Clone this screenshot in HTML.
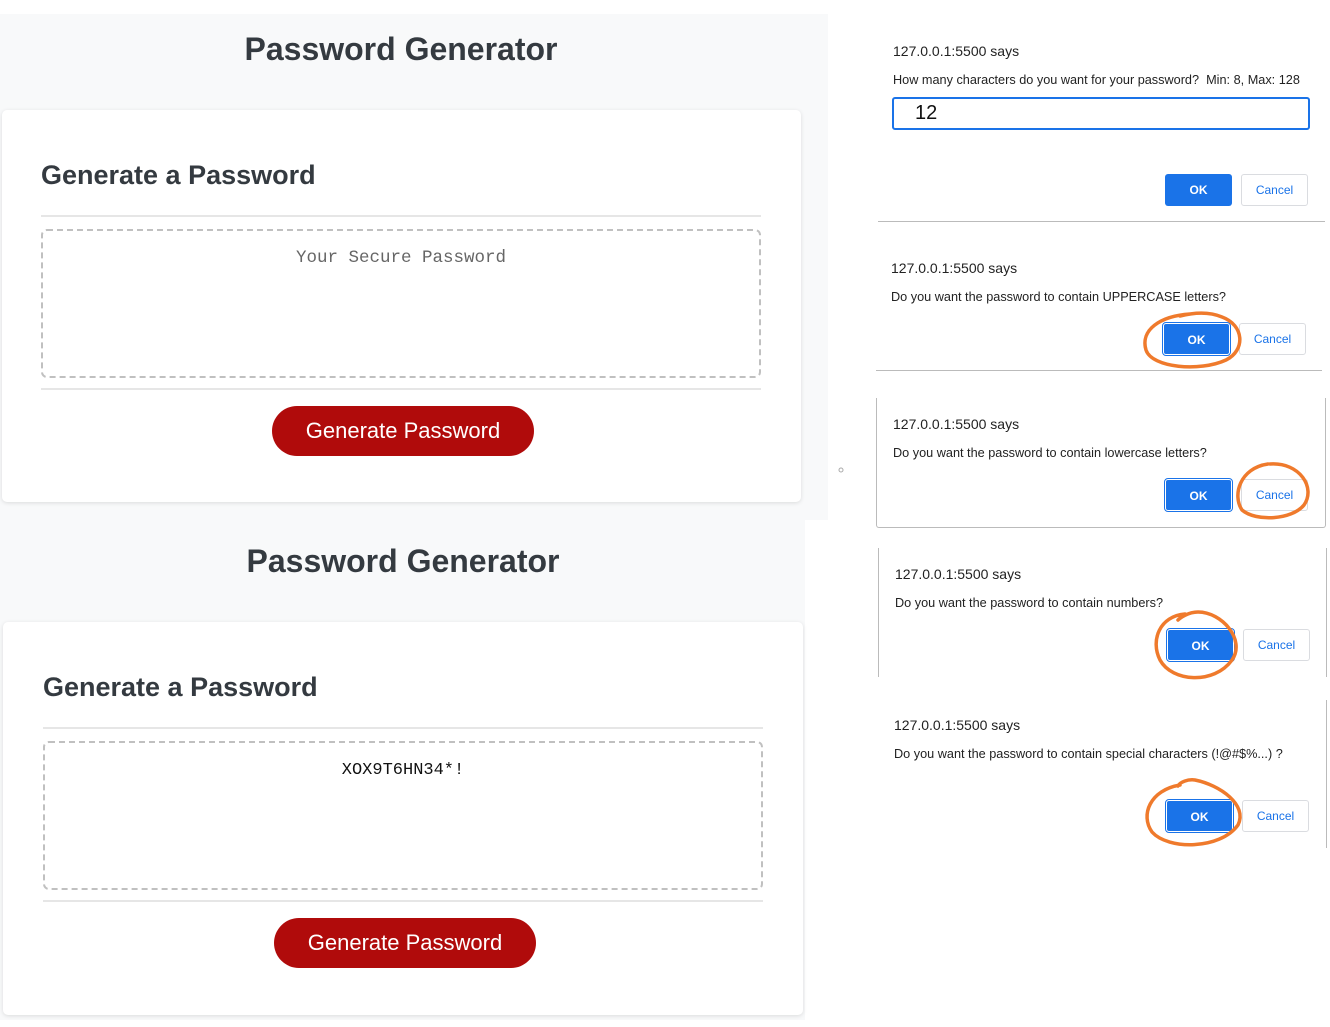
<!DOCTYPE html>
<html><head><meta charset="utf-8"><style>
*{margin:0;padding:0;box-sizing:border-box}
body{width:1330px;height:1027px;background:#fff;position:relative;overflow:hidden;font-family:"Liberation Sans",sans-serif}
.a{position:absolute}
.bg{background:#f8f9fa}
.card{background:#fff;border-radius:5px;box-shadow:0 1px 4px rgba(0,0,0,.12)}
.t1{font-weight:bold;font-size:32px;color:#343a40;text-align:center;width:800px}
.t2{font-weight:bold;font-size:27px;color:#343a40}
.hr{height:2px;background:#e6e6e6}
.box{border:2px dashed #c0c0c0;border-radius:6px;font-family:"Liberation Mono",monospace;text-align:center}
.btn{background:#b00b0b;color:#fff;font-size:22px;border-radius:26px;text-align:center;line-height:50px}
.dt{font-size:14px;color:#222}
.dm{font-size:12.7px;color:#222}
.ok{background:#1a73e8;color:#fff;font-size:12px;font-weight:bold;text-align:center;line-height:32px;width:67px;height:32px;border-radius:3px}
.ca{background:#fff;color:#1a73e8;font-size:12px;text-align:center;line-height:30px;width:67px;height:32px;border:1px solid #dadce0;border-radius:3px}
</style></head><body>
<div class="a bg" style="left:0;top:14px;width:828px;height:506px"></div>
<div class="a t1" style="left:1px;top:31px">Password Generator</div>
<div class="a card" style="left:2px;top:110px;width:799px;height:392px"></div>
<div class="a t2" style="left:41px;top:160px">Generate a Password</div>
<div class="a hr" style="left:41px;top:215px;width:720px"></div>
<div class="a box" style="left:41px;top:229px;width:720px;height:149px;color:#666;font-size:17.5px;padding-top:17px">Your Secure Password</div>
<div class="a hr" style="left:41px;top:388px;width:720px"></div>
<div class="a btn" style="left:272px;top:406px;width:262px;height:50px">Generate Password</div>

<div class="a bg" style="left:0;top:520px;width:805px;height:500px"></div>
<div class="a t1" style="left:3px;top:543px">Password Generator</div>
<div class="a card" style="left:3px;top:622px;width:800px;height:393px"></div>
<div class="a t2" style="left:43px;top:672px">Generate a Password</div>
<div class="a hr" style="left:43px;top:727px;width:720px"></div>
<div class="a box" style="left:43px;top:741px;width:720px;height:149px;color:#111;font-size:17px;padding-top:18px">XOX9T6HN34*!</div>
<div class="a hr" style="left:43px;top:900px;width:720px"></div>
<div class="a btn" style="left:274px;top:918px;width:262px;height:50px">Generate Password</div>

<div class="a" style="left:878px;top:221px;width:447px;height:1px;background:#bbb"></div>
<div class="a dt" style="left:893px;top:43px">127.0.0.1:5500 says</div>
<div class="a dm" style="left:893px;top:73px">How many characters do you want for your password?&nbsp; Min: 8, Max: 128</div>
<div class="a" style="left:892px;top:97px;width:418px;height:33px;border:2px solid #1a73e8;border-radius:3px;font-size:20px;padding-left:21px;line-height:28px;color:#111">12</div>
<div class="a ok" style="left:1165px;top:174px">OK</div>
<div class="a ca" style="left:1241px;top:174px">Cancel</div>

<div class="a" style="left:876px;top:370px;width:446px;height:1px;background:#bbb"></div>
<div class="a dt" style="left:891px;top:260px">127.0.0.1:5500 says</div>
<div class="a dm" style="left:891px;top:290px">Do you want the password to contain UPPERCASE letters?</div>
<div class="a ok" style="left:1163px;top:323px;border:1px solid #fff;outline:1px solid #1a73e8">OK</div>
<div class="a ca" style="left:1239px;top:323px">Cancel</div>

<div class="a" style="left:876px;top:398px;width:450px;height:130px;border:1px solid #bbb;border-top:none;border-radius:0 0 3px 3px"></div>
<div class="a dt" style="left:893px;top:416px">127.0.0.1:5500 says</div>
<div class="a dm" style="left:893px;top:446px">Do you want the password to contain lowercase letters?</div>
<div class="a ok" style="left:1165px;top:479px;border:1px solid #fff;outline:1px solid #1a73e8">OK</div>
<div class="a ca" style="left:1241px;top:479px">Cancel</div>

<div class="a" style="left:878px;top:548px;width:449px;height:129px;border-left:1px solid #bbb;border-right:1px solid #bbb"></div>
<div class="a dt" style="left:895px;top:566px">127.0.0.1:5500 says</div>
<div class="a dm" style="left:895px;top:596px">Do you want the password to contain numbers?</div>
<div class="a ok" style="left:1167px;top:629px;border:1px solid #fff;outline:1px solid #1a73e8">OK</div>
<div class="a ca" style="left:1243px;top:629px">Cancel</div>

<div class="a" style="left:1326px;top:700px;width:1px;height:148px;background:#bbb"></div>
<div class="a dt" style="left:894px;top:717px">127.0.0.1:5500 says</div>
<div class="a dm" style="left:894px;top:747px">Do you want the password to contain special characters (!@#$%...) ?</div>
<div class="a ok" style="left:1166px;top:800px;border:1px solid #fff;outline:1px solid #1a73e8">OK</div>
<div class="a ca" style="left:1242px;top:800px">Cancel</div>

<svg class="a" style="left:0;top:0" width="1330" height="1027">
<g fill="none" stroke="#ef7a2c" stroke-width="3.5" stroke-linecap="round">
<path d="M1190 314 C1160 316 1140 330 1146 350 C1152 368 1200 372 1226 360 C1246 350 1244 325 1222 317 C1210 312 1196 312 1180 316"/>
<path d="M1268 464 C1240 468 1232 495 1242 510 C1256 522 1292 520 1304 505 C1316 488 1300 462 1270 464"/>
<path d="M1185 614 C1160 616 1150 640 1160 660 C1172 682 1214 685 1232 660 C1246 640 1222 612 1198 612 C1188 612 1180 618 1178 620"/>
<path d="M1180 785 C1150 790 1140 815 1152 832 C1168 850 1220 850 1238 825 C1248 805 1220 785 1195 780 C1188 779 1180 782 1178 786"/>
</g>
<circle cx="841" cy="470" r="2" fill="none" stroke="#aaa"/>
</svg>
</body></html>
